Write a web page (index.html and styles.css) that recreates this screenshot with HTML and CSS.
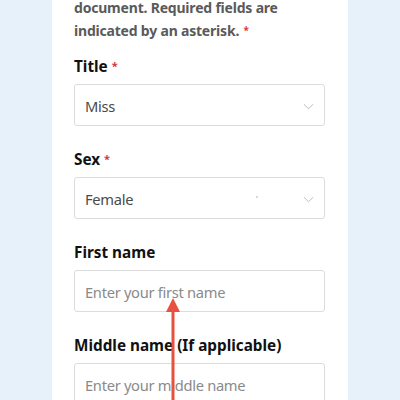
FILE: index.html
```html
<!DOCTYPE html>
<html lang="en">
<head>
<meta charset="utf-8">
<link rel="stylesheet" href="styles.css">
</head>
<body>
<div class="card">
  <p class="intro">document. Required fields are indicated by an asterisk. <span class="req">*</span></p>
  <div class="field">
    <label class="label">Title <span class="req">*</span></label>
    <div class="input select"><span class="value">Miss</span><svg class="chev" viewBox="0 0 12 7" width="11" height="7"><path d="M1 1l5 5 5-5" fill="none" stroke="#b5b5b5" stroke-width="1"/></svg></div>
  </div>
  <div class="field">
    <label class="label">Sex <span class="req">*</span></label>
    <div class="input select"><span class="value">Female</span><span class="dot"></span><svg class="chev" viewBox="0 0 12 7" width="11" height="7"><path d="M1 1l5 5 5-5" fill="none" stroke="#b5b5b5" stroke-width="1"/></svg></div>
  </div>
  <div class="field">
    <label class="label">First name</label>
    <div class="input"><span class="placeholder">Enter your first name</span></div>
  </div>
  <div class="field">
    <label class="label">Middle name (If applicable)</label>
    <div class="input"><span class="placeholder">Enter your middle name</span></div>
  </div>
</div>
<svg class="arrow" viewBox="0 0 16 102" width="16" height="102"><polygon points="8,0 15,14 1,14" fill="#e8503f"/><rect x="6.5" y="12" width="3" height="90" fill="#e8503f"/></svg>
</body>
</html>
```
FILE: styles.css
```css
html, body {
  margin: 0;
  padding: 0;
  height: 400px;
  overflow: hidden;
  background: #e7f1f9;
  font-family: "Noto Sans", sans-serif;
}
.card {
  width: 251px;
  margin-left: 52px;
  padding: 0 23px 0 22px;
  height: 400px;
  background: #fff;
  display: flex;
  flex-direction: column;
  gap: 23px;
}
.intro {
  margin: -3px 0 -9px 0;
  font-size: 14px;
  line-height: 22px;
  font-weight: 700;
  color: #5a5a5a;
  letter-spacing: -0.2px;
}
.intro .req {
  font-size: 10px;
  margin-left: 1px;
}
.req {
  color: #d4373f;
  font-size: 11px;
  vertical-align: 2px;
}
.field {
  display: flex;
  flex-direction: column;
  gap: 8px;
}
.field + .field .input {
  margin-top: 0;
}
.label {
  font-size: 15.3px;
  line-height: 20px;
  font-weight: 700;
  color: #111;
}
.input {
  height: 40px;
  box-sizing: content-box;
  border: 1px solid #dcdcdc;
  border-radius: 3px;
  display: flex;
  align-items: center;
  padding: 2px 10px 0 10px;
  height: 38px;
  font-size: 14.7px;
  letter-spacing: -0.3px;
  position: relative;
}
.value { color: #4a4a4a; flex: 1; }
.placeholder { color: #8a8a8a; }
.dot {
  position: absolute;
  left: 181px;
  top: 18px;
  width: 2px;
  height: 2px;
  border-radius: 50%;
  background: #ccc;
}
.arrow {
  position: absolute;
  left: 165px;
  top: 298px;
}
```
